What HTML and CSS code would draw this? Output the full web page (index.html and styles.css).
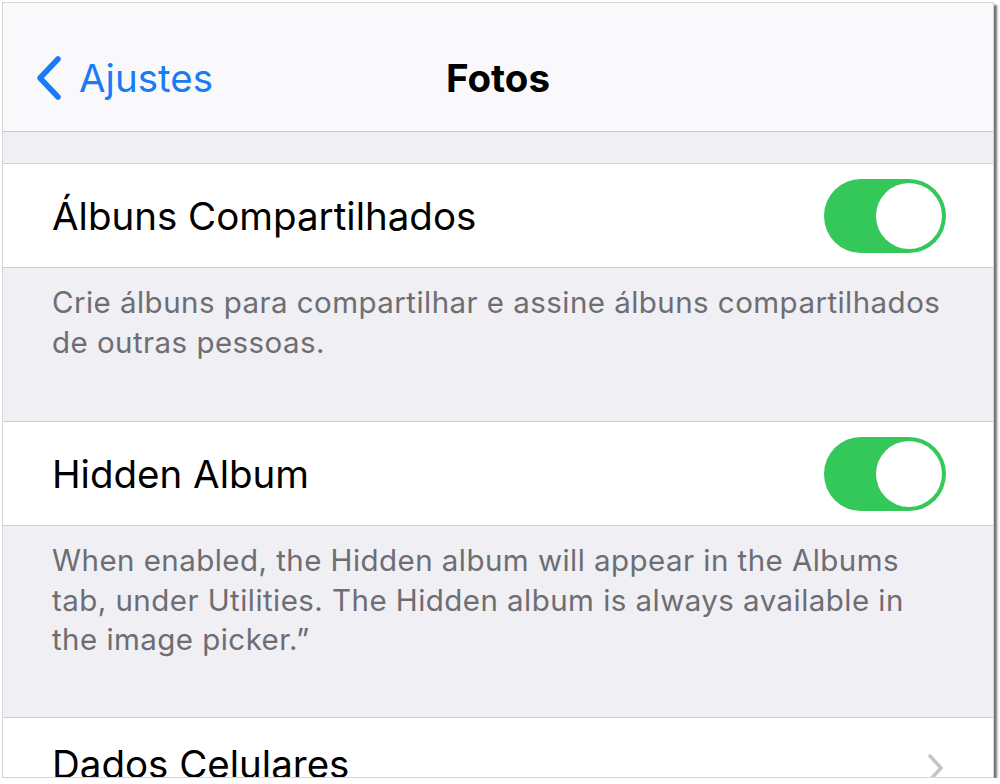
FILE: index.html
```html
<!DOCTYPE html>
<html lang="pt">
<head>
<meta charset="utf-8">
<title>Fotos</title>
<link rel="stylesheet" href="styles.css">
</head>
<body>
<div class="frame">
  <header class="nav">
    <a class="back">
      <svg class="chev" width="28" height="46" viewBox="0 0 28 46"><path d="M23 4 L5 23 L23 42" fill="none" stroke="#1a7cf5" stroke-width="5.5" stroke-linecap="round" stroke-linejoin="round"/></svg>
      <span>Ajustes</span>
    </a>
    <h1 class="title">Fotos</h1>
  </header>
  <div class="spacer"></div>
  <div class="row">
    <span class="label">Álbuns Compartilhados</span>
    <span class="toggle"><span class="knob"></span></span>
  </div>
  <p class="footer f1">Crie álbuns para compartilhar e assine álbuns compartilhados de outras pessoas.</p>
  <div class="row">
    <span class="label">Hidden Album</span>
    <span class="toggle"><span class="knob"></span></span>
  </div>
  <p class="footer f2">When enabled, the Hidden album will appear in the Albums tab, under Utilities. The Hidden album is always available in the image picker.”</p>
  <div class="row last">
    <span class="label">Dados Celulares</span>
    <svg class="disc" width="18" height="30" viewBox="0 0 18 30"><path d="M3 3 L14 15 L3 27" fill="none" stroke="#c4c4c7" stroke-width="3.5" stroke-linecap="round" stroke-linejoin="round"/></svg>
  </div>
</div>
</body>
</html>
```
FILE: styles.css
```css
* { box-sizing: border-box; }
html, body { margin: 0; padding: 0; background: #fff; }
body {
  font-family: Inter, "Noto Sans", sans-serif;
  padding: 2px 0 0 2px;
}
.frame {
  width: 992px;
  height: 776px;
  border: 1px solid #d4d4d4;
  background: #efeff4;
  overflow: hidden;
  box-shadow: 3px 3px 2px rgba(0,0,0,0.55);
  display: flex;
  flex-direction: column;
}
.nav {
  height: 129px;
  flex: none;
  background: #f9f9fb;
  border-bottom: 1px solid #c6c6c9;
  display: grid;
  grid-template-columns: 1fr auto 1fr;
  align-items: center;
  padding-top: 22px;
}
.back {
  display: flex;
  align-items: center;
  gap: 16px;
  padding-left: 32px;
  color: #1a7cf5;
  font-size: 38.5px;
}
.title {
  margin: 0;
  font-size: 38.5px;
  font-weight: 700;
  color: #000;
}
.spacer { height: 31px; flex: none; }
.row {
  flex: none;
  height: 105px;
  background: #fff;
  border-top: 1px solid #cfcfd3;
  border-bottom: 1px solid #cfcfd3;
  display: flex;
  align-items: center;
  justify-content: space-between;
  padding: 0 47px 0 49px;
}
.label {
  font-size: 38.5px;
  color: #000;
}
.toggle {
  width: 122px;
  height: 74px;
  border-radius: 37px;
  background: #34c759;
  position: relative;
}
.knob {
  position: absolute;
  right: 4px;
  top: 4px;
  width: 66px;
  height: 66px;
  border-radius: 50%;
  background: #fff;
}
.footer {
  flex: none;
  margin: 0;
  padding: 15px 45px 0 49px;
  font-size: 29.5px;
  letter-spacing: 0.45px;
  line-height: 39.5px;
  color: #6d6d72;
}
.f1 { height: 153px; }
.f2 { height: 191px; }
.row.last { height: 80px; align-items: flex-start; padding-top: 23px; border-bottom: none; }
.disc { margin-top: 12px; margin-right: 1px; }
```
